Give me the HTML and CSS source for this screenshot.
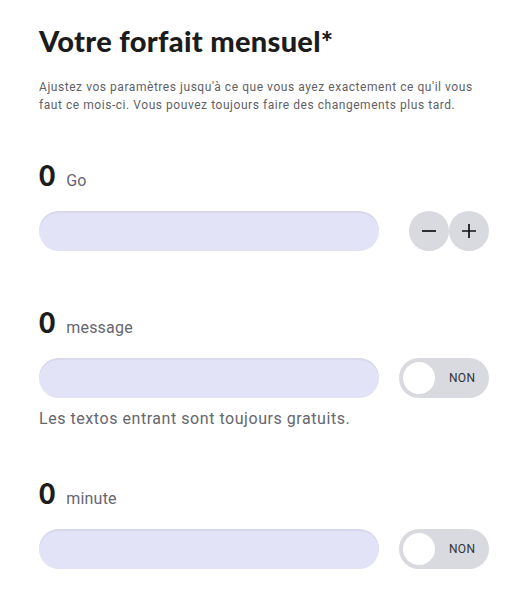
FILE: index.html
```html
<!DOCTYPE html>
<html lang="fr">
<head>
<meta charset="utf-8">
<link rel="stylesheet" href="styles.css">
</head>
<body>
<main class="page">
  <h1 class="title">Votre forfait mensuel*</h1>
  <p class="intro">Ajustez vos paramètres jusqu'à ce que vous ayez exactement ce qu'il vous faut ce mois-ci. Vous pouvez toujours faire des changements plus tard.</p>

  <section class="item item-data">
    <div class="value"><span class="num">0</span><span class="unit">Go</span></div>
    <div class="controls">
      <div class="track"></div>
      <div class="steppers">
        <button class="step" aria-label="moins">
          <svg width="18" height="18" viewBox="0 0 18 18"><path d="M2 9h14" stroke="#111" stroke-width="1.7"/></svg>
        </button>
        <button class="step" aria-label="plus">
          <svg width="18" height="18" viewBox="0 0 18 18"><path d="M2 9h14M9 2v14" stroke="#111" stroke-width="1.7"/></svg>
        </button>
      </div>
    </div>
  </section>

  <section class="item item-msg">
    <div class="value"><span class="num">0</span><span class="unit">message</span></div>
    <div class="controls">
      <div class="track"></div>
      <div class="toggle"><span class="knob"></span><span class="toggle-label">NON</span></div>
    </div>
    <p class="note">Les textos entrant sont toujours gratuits.</p>
  </section>

  <section class="item item-min">
    <div class="value"><span class="num">0</span><span class="unit">minute</span></div>
    <div class="controls">
      <div class="track"></div>
      <div class="toggle"><span class="knob"></span><span class="toggle-label">NON</span></div>
    </div>
  </section>
</main>
</body>
</html>
```

FILE: styles.css
```css
* { box-sizing: border-box; }
html, body { margin: 0; padding: 0; background: #fff; }
body { font-family: Roboto, "Noto Sans", sans-serif; color: #222; }

.page {
  width: 532px;
  padding: 23px 43px 0 39px;
}

.title {
  margin: 0;
  font-family: Lato, "Noto Sans", sans-serif;
  font-weight: 900;
  font-size: 29px;
  line-height: 36px;
  color: #1c1c1c;
  letter-spacing: 0.3px;
}

.intro {
  margin: 19px 0 0;
  font-size: 12px;
  line-height: 18px;
  color: #5f5f66;
  letter-spacing: 0.55px;
}

.item { margin-top: 46px; }
.item-msg { margin-top: 56px; }
.item-min { margin-top: 49px; }

.value {
  display: flex;
  align-items: baseline;
  gap: 11px;
  height: 30px;
}
.num {
  font-family: Lato, "Noto Sans", sans-serif;
  font-weight: 900;
  font-size: 28px;
  line-height: 30px;
  color: #1c1c1c;
}
.unit {
  font-size: 16px;
  color: #66666e;
  letter-spacing: 0.2px;
}

.controls {
  display: flex;
  align-items: center;
  justify-content: space-between;
  margin-top: 21px;
  height: 40px;
}

.track {
  width: 340px;
  height: 40px;
  border-radius: 20px;
  background: #e3e3f7;
  box-shadow: inset 0 2px 0 #d9d9ee;
}

.steppers { display: flex; }
.step {
  width: 40px;
  height: 40px;
  border: 0;
  padding: 0;
  border-radius: 50%;
  background: #d9d9e0;
  display: flex;
  align-items: center;
  justify-content: center;
}

.toggle {
  width: 90px;
  height: 40px;
  border-radius: 20px;
  background: #d9d9e0;
  display: flex;
  align-items: center;
  padding: 0 4px;
}
.knob {
  width: 32px;
  height: 32px;
  border-radius: 50%;
  background: #fff;
}
.toggle-label {
  margin-left: 14px;
  font-size: 12px;
  color: #333;
  letter-spacing: 0.3px;
}

.note {
  margin: 11px 0 0;
  font-size: 16px;
  line-height: 20px;
  color: #66666e;
  letter-spacing: 0.55px;
}
```
